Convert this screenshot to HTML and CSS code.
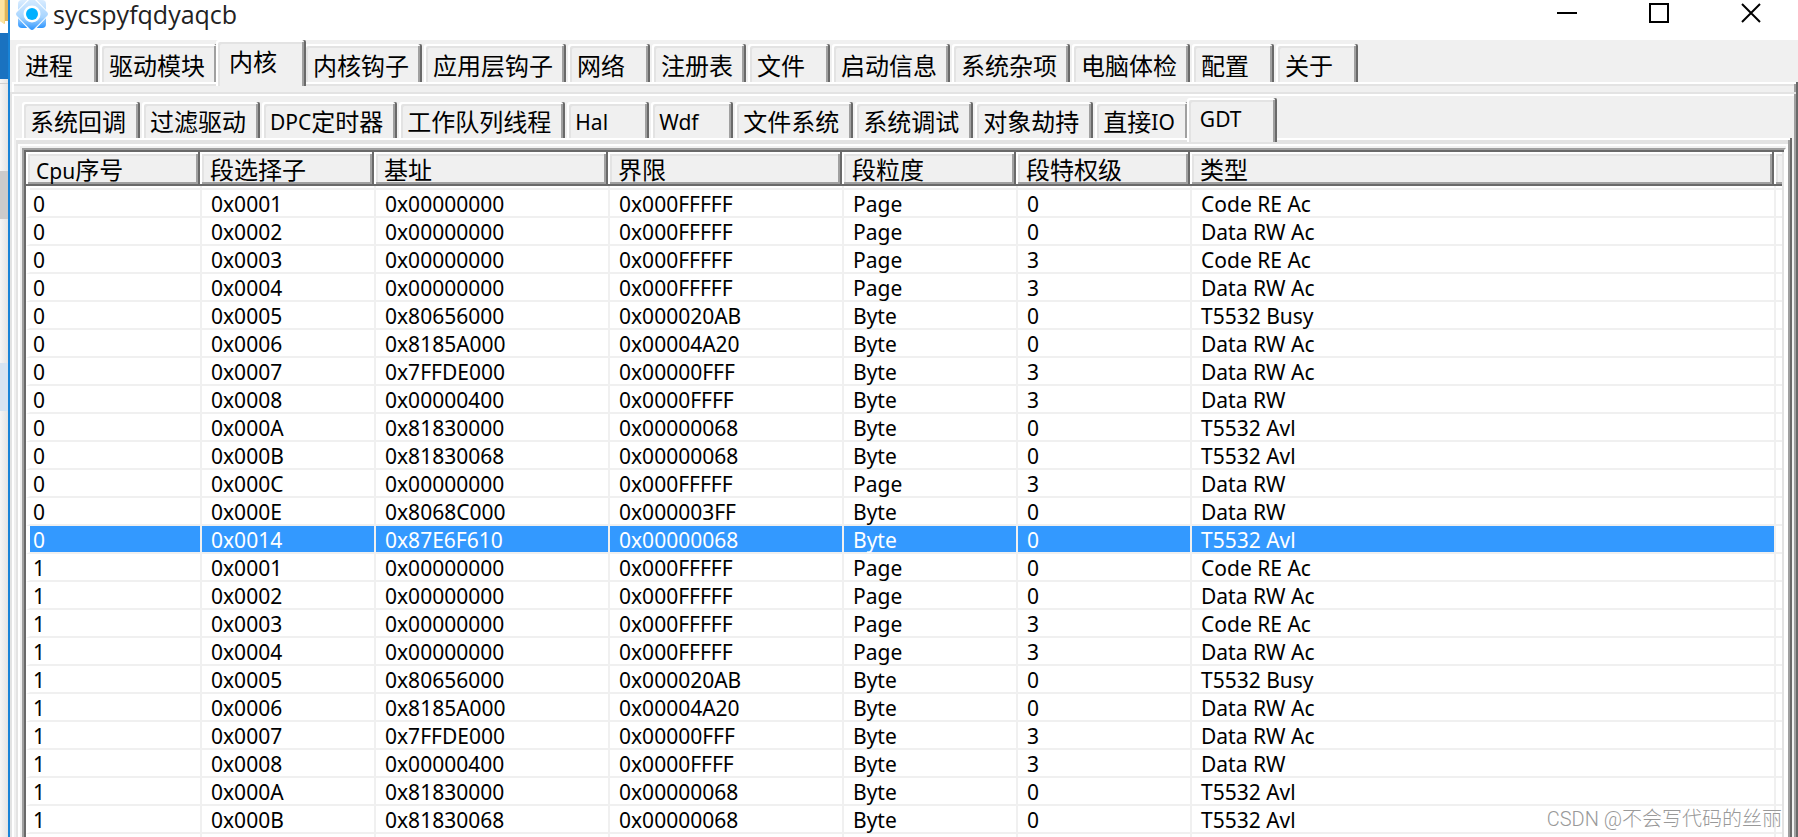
FILE: index.html
```html
<!DOCTYPE html>
<html lang="zh-CN">
<head>
<meta charset="utf-8">
<title>sycspyfqdyaqcb</title>
<link rel="stylesheet" href="styles.css">
</head>
<body>
<div class="backdrop" aria-hidden="true">
  <svg class="folder" width="8" height="33" viewBox="0 0 8 33"><path d="M0 0H8V21H5V24L0 21Z" fill="#f5d67f"/><path d="M0 0H4V24L0 21Z" fill="#fbe3a0"/><path d="M5 0H8V21H5Z" fill="#dcb35c"/></svg>
  <div class="strip strip-blue"></div>
  <div class="strip strip-line"></div>
  <div class="strip strip-gap"></div>
  <div class="strip strip-gray"></div>
  <div class="strip strip-wide"></div>
  <div class="strip strip-pale"></div>
</div>
<main class="window">
  <header class="titlebar">
    <svg class="logo" width="32" height="32" viewBox="0 0 32 32" aria-hidden="true">
      <defs><linearGradient id="lg" x1="0" y1="0" x2="0" y2="1"><stop offset="0" stop-color="#d9ecff"/><stop offset=".6" stop-color="#a8d5ff"/><stop offset="1" stop-color="#2e96ff"/></linearGradient></defs>
      <rect x="2" y="2" width="28" height="28" rx="4" fill="url(#lg)"/>
      <path d="M16-3L34 16L16 35L-2 16Z" fill="#fff"/>
      <path d="M14 1Q16-1 18 1L31 14Q33 16 31 18L18 31Q16 33 14 31L1 18Q-1 16 1 14Z" fill="url(#lg)"/>
      <circle cx="16" cy="16" r="8.500" fill="#fff"/>
      <circle cx="16" cy="16" r="6" fill="#00b0ff"/>
    </svg>
    <h1 class="caption">sycspyfqdyaqcb</h1>
    <div class="controls">
      <button class="control" aria-label="最小化"><svg width="20" height="20" viewBox="0 0 20 20"><path d="M0 10H20" stroke="#000" stroke-width="2"/></svg></button>
      <button class="control" aria-label="最大化"><svg width="20" height="20" viewBox="0 0 20 20"><rect x="1" y="1" width="18" height="18" fill="none" stroke="#000" stroke-width="2"/></svg></button>
      <button class="control" aria-label="关闭"><svg width="20" height="20" viewBox="0 0 20 20"><path d="M1 1L19 19M19 1L1 19" stroke="#000" stroke-width="2"/></svg></button>
    </div>
  </header>
  <nav class="tabs tabs-main" role="tablist">
    <button class="tab" role="tab">进程</button>
    <button class="tab" role="tab">驱动模块</button>
    <button class="tab selected" role="tab" aria-selected="true">内核</button>
    <button class="tab" role="tab">内核钩子</button>
    <button class="tab" role="tab">应用层钩子</button>
    <button class="tab" role="tab">网络</button>
    <button class="tab" role="tab">注册表</button>
    <button class="tab" role="tab">文件</button>
    <button class="tab" role="tab">启动信息</button>
    <button class="tab" role="tab">系统杂项</button>
    <button class="tab" role="tab">电脑体检</button>
    <button class="tab" role="tab">配置</button>
    <button class="tab" role="tab">关于</button>
  </nav>
  <div class="pane-edge"></div>
  <section class="page">
    <nav class="tabs tabs-sub" role="tablist">
      <button class="tab" role="tab">系统回调</button>
      <button class="tab" role="tab">过滤驱动</button>
      <button class="tab" role="tab"><span class="latin">DPC</span>定时器</button>
      <button class="tab" role="tab">工作队列线程</button>
      <button class="tab" role="tab"><span class="latin">Hal</span></button>
      <button class="tab" role="tab"><span class="latin">Wdf</span></button>
      <button class="tab" role="tab">文件系统</button>
      <button class="tab" role="tab">系统调试</button>
      <button class="tab" role="tab">对象劫持</button>
      <button class="tab" role="tab">直接<span class="latin">IO</span></button>
      <button class="tab selected" role="tab" aria-selected="true"><span class="latin">GDT</span></button>
    </nav>
    <div class="subpane">
      <div class="list">
        <table class="grid">
          <colgroup><col class="c-first"><col class="c-narrow"><col class="c-wide"><col class="c-wide"><col class="c-narrow"><col class="c-narrow"><col><col class="c-end"></colgroup>
          <thead><tr><th><span class="latin">Cpu</span>序号</th><th>段选择子</th><th>基址</th><th>界限</th><th>段粒度</th><th>段特权级</th><th>类型</th><th></th></tr></thead>
          <tbody>
            <tr><td>0</td><td>0x0001</td><td>0x00000000</td><td>0x000FFFFF</td><td>Page</td><td>0</td><td>Code RE Ac</td><td></td></tr>
            <tr><td>0</td><td>0x0002</td><td>0x00000000</td><td>0x000FFFFF</td><td>Page</td><td>0</td><td>Data RW Ac</td><td></td></tr>
            <tr><td>0</td><td>0x0003</td><td>0x00000000</td><td>0x000FFFFF</td><td>Page</td><td>3</td><td>Code RE Ac</td><td></td></tr>
            <tr><td>0</td><td>0x0004</td><td>0x00000000</td><td>0x000FFFFF</td><td>Page</td><td>3</td><td>Data RW Ac</td><td></td></tr>
            <tr><td>0</td><td>0x0005</td><td>0x80656000</td><td>0x000020AB</td><td>Byte</td><td>0</td><td>T5532 Busy</td><td></td></tr>
            <tr><td>0</td><td>0x0006</td><td>0x8185A000</td><td>0x00004A20</td><td>Byte</td><td>0</td><td>Data RW Ac</td><td></td></tr>
            <tr><td>0</td><td>0x0007</td><td>0x7FFDE000</td><td>0x00000FFF</td><td>Byte</td><td>3</td><td>Data RW Ac</td><td></td></tr>
            <tr><td>0</td><td>0x0008</td><td>0x00000400</td><td>0x0000FFFF</td><td>Byte</td><td>3</td><td>Data RW</td><td></td></tr>
            <tr><td>0</td><td>0x000A</td><td>0x81830000</td><td>0x00000068</td><td>Byte</td><td>0</td><td>T5532 Avl</td><td></td></tr>
            <tr><td>0</td><td>0x000B</td><td>0x81830068</td><td>0x00000068</td><td>Byte</td><td>0</td><td>T5532 Avl</td><td></td></tr>
            <tr><td>0</td><td>0x000C</td><td>0x00000000</td><td>0x000FFFFF</td><td>Page</td><td>3</td><td>Data RW</td><td></td></tr>
            <tr><td>0</td><td>0x000E</td><td>0x8068C000</td><td>0x000003FF</td><td>Byte</td><td>0</td><td>Data RW</td><td></td></tr>
            <tr class="active"><td>0</td><td>0x0014</td><td>0x87E6F610</td><td>0x00000068</td><td>Byte</td><td>0</td><td>T5532 Avl</td><td></td></tr>
            <tr><td>1</td><td>0x0001</td><td>0x00000000</td><td>0x000FFFFF</td><td>Page</td><td>0</td><td>Code RE Ac</td><td></td></tr>
            <tr><td>1</td><td>0x0002</td><td>0x00000000</td><td>0x000FFFFF</td><td>Page</td><td>0</td><td>Data RW Ac</td><td></td></tr>
            <tr><td>1</td><td>0x0003</td><td>0x00000000</td><td>0x000FFFFF</td><td>Page</td><td>3</td><td>Code RE Ac</td><td></td></tr>
            <tr><td>1</td><td>0x0004</td><td>0x00000000</td><td>0x000FFFFF</td><td>Page</td><td>3</td><td>Data RW Ac</td><td></td></tr>
            <tr><td>1</td><td>0x0005</td><td>0x80656000</td><td>0x000020AB</td><td>Byte</td><td>0</td><td>T5532 Busy</td><td></td></tr>
            <tr><td>1</td><td>0x0006</td><td>0x8185A000</td><td>0x00004A20</td><td>Byte</td><td>0</td><td>Data RW Ac</td><td></td></tr>
            <tr><td>1</td><td>0x0007</td><td>0x7FFDE000</td><td>0x00000FFF</td><td>Byte</td><td>3</td><td>Data RW Ac</td><td></td></tr>
            <tr><td>1</td><td>0x0008</td><td>0x00000400</td><td>0x0000FFFF</td><td>Byte</td><td>3</td><td>Data RW</td><td></td></tr>
            <tr><td>1</td><td>0x000A</td><td>0x81830000</td><td>0x00000068</td><td>Byte</td><td>0</td><td>T5532 Avl</td><td></td></tr>
            <tr><td>1</td><td>0x000B</td><td>0x81830068</td><td>0x00000068</td><td>Byte</td><td>0</td><td>T5532 Avl</td><td></td></tr>
            <tr><td></td><td></td><td></td><td></td><td></td><td></td><td></td><td></td></tr>
          </tbody>
        </table>
      </div>
    </div>
  </section>
  <p class="watermark">CSDN @不会写代码的丝丽</p>
</main>
</body>
</html>
```
FILE: styles.css
```css
:root {
  --face: #f0f0f0;
  --light: #e3e3e3;
  --shade: #a0a0a0;
  --dark: #696969;
  --ui: "Noto Sans", "Noto Sans CJK SC", sans-serif;
}

* { box-sizing: border-box; }

body {
  margin: 0;
  height: 100vh;
  overflow: hidden;
  display: flex;
  background: #fff;
  color: #000;
  font-family: var(--ui);
  font-size: 24px;
}

button { font: inherit; color: inherit; border: 0; padding: 0; background: none; }

/* strip of the window lying behind */
.backdrop {
  flex: none;
  width: 8px;
  display: flex;
  flex-direction: column;
  background: linear-gradient(90deg, #f6f6f6, #e4e4e4);
}
.folder { display: block; background: #fff; }
.strip { flex: none; }
.strip-blue { height: 46px; background: #1a72c0; }
.strip-line { height: 5px; border-bottom: 1px solid #d0d0d0; }
.strip-gap { height: 87px; }
.strip-gray { height: 48px; background: #cbcbcb; }
.strip-wide { height: 144px; }
.strip-pale { height: 48px; background: #d6e4f2; }

.window {
  position: relative;
  flex: 1;
  min-width: 0;
  display: flex;
  flex-direction: column;
  border-left: 2px solid #1883d7;
  background: var(--face);
}

.titlebar {
  flex: none;
  height: 40px;
  display: flex;
  align-items: flex-start;
  background: #fff;
  padding: 0 1px 0 6px;
}
.logo { display: block; margin-top: -2px; }
.caption {
  margin: 0 0 0 5px;
  font: 400 25px/28px "Open Sans", sans-serif;
  color: #222;
}
.controls { margin-left: auto; display: flex; }
.control { width: 92px; height: 26px; display: grid; place-items: center; }

.tabs {
  flex: none;
  display: flex;
  align-items: flex-start;
  gap: 2px;
  padding-top: 4px;
}
.tabs-main { height: 42px; padding-left: 6px; --tab-height: 38px; --tab-top: 5px; }
.tabs-sub { height: 42px; padding: 6px 0 0 6px; --tab-height: 36px; --tab-top: 4px; }
.tab {
  flex: none;
  min-width: 82px;
  height: var(--tab-height);
  padding: var(--tab-top) 13px 0 9px;
  display: flex;
  align-items: center;
  line-height: 28px;
  white-space: nowrap;
  border-radius: 2px 2px 0 0;
  background: var(--face);
  box-shadow: inset -2px 0 var(--dark), inset 2px 2px #fff, inset -4px 0 var(--shade), inset 4px 4px var(--light);
}
.tabs-sub .tab { padding-left: 8px; padding-right: 14px; }
.tabs .tab.selected {
  position: relative;
  z-index: 1;
  min-width: 90px;
  height: calc(var(--tab-height) + 8px);
  margin: -4px -4px 0;
  padding: 0 16px 2px 13px;
}
.latin { font-size: 21px; }

.pane-edge {
  flex: none;
  height: 10px;
  margin-left: 2px;
  box-shadow: inset -2px 0 var(--dark), inset 2px 2px #fff, inset -4px 0 var(--shade), inset 0 4px var(--light);
}
.page {
  flex: 1;
  min-height: 0;
  display: flex;
  flex-direction: column;
  padding: 4px 6px 0;
  box-shadow: inset -2px 0 var(--dark), inset 2px 2px var(--light), inset -4px 0 var(--shade), inset 4px 4px #fff;
}
.subpane {
  flex: 1;
  min-height: 0;
  display: flex;
  padding: 10px 6px 0;
  box-shadow: inset -2px 0 var(--dark), inset 0 2px #fff, inset -4px 0 var(--shade), inset 2px 6px var(--light), inset 4px 8px #fff, inset -6px 0 #fff;
}
.list {
  flex: 1;
  min-width: 0;
  overflow: hidden;
  border: solid;
  border-width: 2px 2px 0;
  border-color: var(--shade) #fff #fff var(--shade);
  background: #fff;
  padding: 2px 2px 0;
  box-shadow: inset 2px 2px var(--dark), inset -2px 0 var(--light);
}

.grid {
  width: 100%;
  table-layout: fixed;
  border-spacing: 0;
  text-align: left;
}
.c-first, .c-narrow { width: 174px; }
.c-wide { width: 234px; }
.c-end { width: 8px; }
.grid th {
  height: 34px;
  padding: 2px 10px 0 10px;
  font-weight: 400;
  line-height: 28px;
  white-space: nowrap;
  background: var(--face);
  box-shadow: inset -2px -2px var(--dark), inset 2px 2px #fff, inset -4px -4px var(--shade), inset 4px 4px var(--light);
}
.grid th:last-child { padding: 0; box-shadow: inset 0 -2px var(--dark), inset 2px 2px #fff, inset 0 -4px var(--shade), inset 4px 4px var(--light); }
.grid td {
  height: 28px;
  padding: 2px 0 0 9px;
  font-size: 21px;
  line-height: 24px;
  white-space: nowrap;
  border-left: 2px solid var(--face);
  border-bottom: 2px solid var(--face);
}
.grid td:first-child { padding-left: 3px; border-left: 4px solid #fff; }
.grid td:last-child { padding: 0; }
.grid tbody tr:first-child td {
  height: 32px;
  padding-top: 6px;
  background: linear-gradient(#fff 2px, var(--face) 2px, var(--face) 4px, #fff 4px);
}
.grid .active td:not(:last-child) { background: #3399ff; background-clip: padding-box; color: #fff; }

.watermark {
  position: absolute;
  right: 16px;
  bottom: 4px;
  margin: 0;
  font: 300 20px/28px Roboto, "Noto Sans CJK SC", sans-serif;
  color: #999;
}
```
